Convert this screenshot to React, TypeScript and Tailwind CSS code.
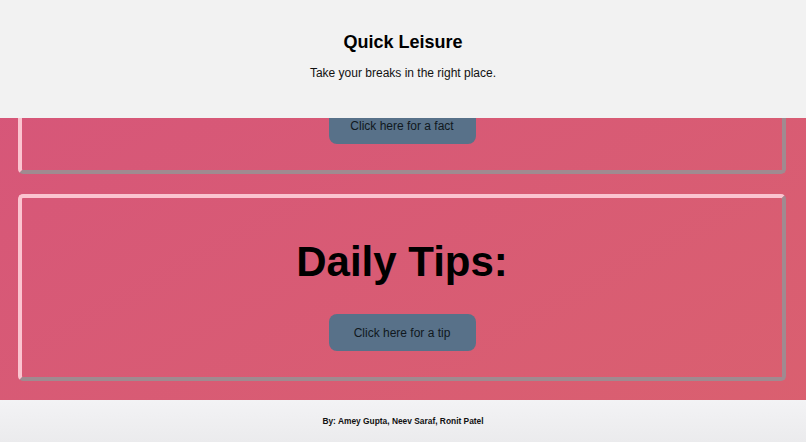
import React from "react"

const font = { fontFamily: '"Liberation Sans", Arial, sans-serif' }

function TipCard({ title, label }: { title?: string; label: string }) {
  return (
    <section className="shrink-0 h-[187px] rounded-[5px] border-4 border-t-[#fbc4d0] border-l-[#fbc4d0] border-b-[#a08a90] border-r-[#a08a90] flex flex-col items-center pt-[43px]">
      {/* the first card's heading sits under the header, so it is left out */}
      {title ? (
        <h2 className="text-[42px] leading-none font-bold text-black">{title}</h2>
      ) : (
        <div className="h-[42px]" />
      )}
      <button className="mt-[31px] w-[147px] h-[37px] rounded-lg bg-[#587189] text-[12px] text-[#101820]">
        {label}
      </button>
    </section>
  )
}

export default function App() {
  return (
    <div style={font} className="h-[442px] w-full flex flex-col bg-gradient-to-br from-[#d6557a] to-[#da606f] overflow-hidden">
      <header className="h-[118px] shrink-0 bg-[#f2f2f2] flex flex-col items-center pt-[32px]">
        <h1 className="text-[18px] leading-[20px] font-bold text-black">Quick Leisure</h1>
        <p className="mt-[14px] text-[12px] leading-[14px] text-[#111]">Take your breaks in the right place.</p>
      </header>

      {/* scrolled view: the first card runs up under the header */}
      <main className="flex-1 min-h-0 overflow-hidden flex flex-col justify-end gap-5 pl-[18px] pr-[20px] pb-[19px]">
        <TipCard label="Click here for a fact" />
        <TipCard title="Daily Tips:" label="Click here for a tip" />
      </main>

      <footer className="h-[42px] shrink-0 bg-gradient-to-b from-[#f3f3f5] to-[#ebebed] flex items-center justify-center">
        <p className="text-[8.4px] font-bold text-[#111]">By: Amey Gupta, Neev Saraf, Ronit Patel</p>
      </footer>
    </div>
  )
}
